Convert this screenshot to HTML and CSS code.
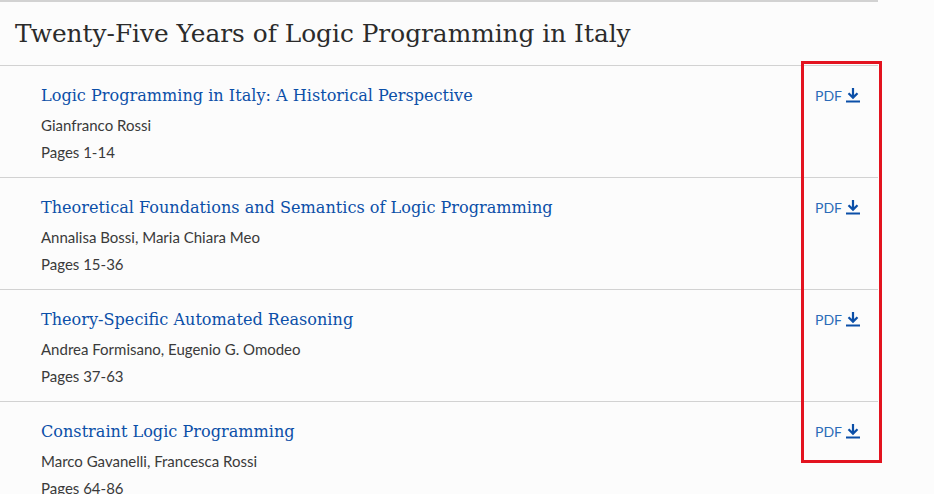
FILE: index.html
```html
<!DOCTYPE html>
<html lang="en">
<head>
  <meta charset="UTF-8" />
  <title>Twenty-Five Years of Logic Programming in Italy</title>
  <link rel="stylesheet" href="styles.css">
</head>
<body>
  <div class="volume">
    <h1 class="volume-title">Twenty-Five Years of Logic Programming in Italy</h1>

    <div class="chapter">
      <div class="chapter-info">
        <a href="#" class="chapter-title">Logic Programming in Italy: A Historical Perspective</a>
        <div class="authors">Gianfranco Rossi</div>
        <div class="pages">Pages 1-14</div>
      </div>
      <a href="#" class="pdf-link">PDF
        <svg class="dl-icon" viewBox="0 0 14 16" width="14" height="16"><path d="M7 1v9M2.5 6.2L7 10.6l4.5-4.4" fill="none" stroke="currentColor" stroke-width="2.2"/><rect x="0" y="13.5" width="14" height="2" fill="currentColor"/></svg>
      </a>
    </div>

    <div class="chapter">
      <div class="chapter-info">
        <a href="#" class="chapter-title">Theoretical Foundations and Semantics of Logic Programming</a>
        <div class="authors">Annalisa Bossi, Maria Chiara Meo</div>
        <div class="pages">Pages 15-36</div>
      </div>
      <a href="#" class="pdf-link">PDF
        <svg class="dl-icon" viewBox="0 0 14 16" width="14" height="16"><path d="M7 1v9M2.5 6.2L7 10.6l4.5-4.4" fill="none" stroke="currentColor" stroke-width="2.2"/><rect x="0" y="13.5" width="14" height="2" fill="currentColor"/></svg>
      </a>
    </div>

    <div class="chapter">
      <div class="chapter-info">
        <a href="#" class="chapter-title">Theory-Specific Automated Reasoning</a>
        <div class="authors">Andrea Formisano, Eugenio G. Omodeo</div>
        <div class="pages">Pages 37-63</div>
      </div>
      <a href="#" class="pdf-link">PDF
        <svg class="dl-icon" viewBox="0 0 14 16" width="14" height="16"><path d="M7 1v9M2.5 6.2L7 10.6l4.5-4.4" fill="none" stroke="currentColor" stroke-width="2.2"/><rect x="0" y="13.5" width="14" height="2" fill="currentColor"/></svg>
      </a>
    </div>

    <div class="chapter">
      <div class="chapter-info">
        <a href="#" class="chapter-title">Constraint Logic Programming</a>
        <div class="authors">Marco Gavanelli, Francesca Rossi</div>
        <div class="pages">Pages 64-86</div>
      </div>
      <a href="#" class="pdf-link">PDF
        <svg class="dl-icon" viewBox="0 0 14 16" width="14" height="16"><path d="M7 1v9M2.5 6.2L7 10.6l4.5-4.4" fill="none" stroke="currentColor" stroke-width="2.2"/><rect x="0" y="13.5" width="14" height="2" fill="currentColor"/></svg>
      </a>
    </div>

    <div class="highlight-box"></div>
  </div>
</body>
</html>
```

FILE: styles.css
```css
body {
  margin: 0;
  background-color: #fcfcfc;
  color: #333;
  font-family: Lato, "Open Sans", sans-serif;
  overflow: hidden;
}
.volume {
  position: relative;
  width: 878px;
  border-top: 2px solid #d2d2d2;
}
.volume-title {
  margin: 0;
  padding: 17px 15px 0;
  height: 46px;
  font-family: "DejaVu Serif", Georgia, serif;
  font-weight: normal;
  font-size: 24.8px;
  color: #2b2b2b;
  border-bottom: 1px solid #d2d2d2;
}
.chapter {
  display: flex;
  justify-content: space-between;
  height: 111px;
  border-bottom: 1px solid #d2d2d2;
}
.chapter-info {
  padding: 18px 0 0 41px;
}
.chapter-title {
  display: block;
  font-family: "DejaVu Serif", Georgia, serif;
  font-size: 16.1px;
  color: #0b4fa8;
  text-decoration: none;
  line-height: 24px;
}
.authors {
  margin-top: 7px;
  font-size: 15px;
  line-height: 20px;
  color: #3a3a3a;
}
.pages {
  margin-top: 7px;
  font-size: 15px;
  line-height: 20px;
  color: #3a3a3a;
}
.pdf-link {
  display: flex;
  align-items: center;
  gap: 4px;
  height: 20px;
  margin: 19px 18px 0 0;
  font-size: 14px;
  color: #2b6bb8;
  text-decoration: none;
}
.dl-icon {
  color: #0b4fa8;
}
.highlight-box {
  position: absolute;
  left: 801px;
  top: 59px;
  width: 75px;
  height: 396px;
  border: 3px solid #e3131f;
}
```
